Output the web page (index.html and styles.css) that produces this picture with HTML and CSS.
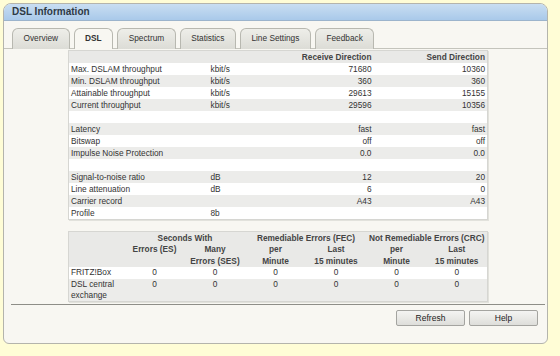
FILE: index.html
```html
<!DOCTYPE html>
<html lang="en">
<head>
  <meta charset="UTF-8">
  <title>DSL Information</title>
  <link rel="stylesheet" href="styles.css">
</head>
<body>
  <div class="box">
    <div class="box-title">DSL Information</div>

    <div class="tabs">
      <span class="tab">Overview</span>
      <span class="tab active">DSL</span>
      <span class="tab">Spectrum</span>
      <span class="tab">Statistics</span>
      <span class="tab">Line Settings</span>
      <span class="tab">Feedback</span>
    </div>

    <div class="content">
      <table class="grid overview">
        <colgroup>
          <col style="width:140px">
          <col style="width:60px">
          <col style="width:105px">
          <col style="width:114px">
        </colgroup>
        <thead>
          <tr><th></th><th></th><th class="num">Receive Direction</th><th class="num">Send Direction</th></tr>
        </thead>
        <tbody>
          <tr><td>Max. DSLAM throughput</td><td>kbit/s</td><td class="num">71680</td><td class="num">10360</td></tr>
          <tr><td>Min. DSLAM throughput</td><td>kbit/s</td><td class="num">360</td><td class="num">360</td></tr>
          <tr><td>Attainable throughput</td><td>kbit/s</td><td class="num">29613</td><td class="num">15155</td></tr>
          <tr><td>Current throughput</td><td>kbit/s</td><td class="num">29596</td><td class="num">10356</td></tr>
          <tr><td>&nbsp;</td><td></td><td></td><td></td></tr>
          <tr><td>Latency</td><td></td><td class="num">fast</td><td class="num">fast</td></tr>
          <tr><td>Bitswap</td><td></td><td class="num">off</td><td class="num">off</td></tr>
          <tr><td>Impulse Noise Protection</td><td></td><td class="num">0.0</td><td class="num">0.0</td></tr>
          <tr><td>&nbsp;</td><td></td><td></td><td></td></tr>
          <tr><td>Signal-to-noise ratio</td><td>dB</td><td class="num">12</td><td class="num">20</td></tr>
          <tr><td>Line attenuation</td><td>dB</td><td class="num">6</td><td class="num">0</td></tr>
          <tr><td>Carrier record</td><td></td><td class="num">A43</td><td class="num">A43</td></tr>
          <tr><td>Profile</td><td>8b</td><td></td><td></td></tr>
        </tbody>
      </table>

      <table class="grid errors">
        <colgroup>
          <col style="width:56px">
          <col style="width:60px">
          <col style="width:61px">
          <col style="width:60px">
          <col style="width:61px">
          <col style="width:60px">
          <col style="width:61px">
        </colgroup>
        <thead>
          <tr>
            <th></th>
            <th colspan="2">Seconds With</th>
            <th colspan="2">Remediable Errors (FEC)</th>
            <th colspan="2">Not Remediable Errors (CRC)</th>
          </tr>
          <tr class="sub">
            <th></th>
            <th>Errors (ES)</th>
            <th>Many<br>Errors (SES)</th>
            <th>per<br>Minute</th>
            <th>Last<br>15 minutes</th>
            <th>per<br>Minute</th>
            <th>Last<br>15 minutes</th>
          </tr>
        </thead>
        <tbody>
          <tr><td>FRITZ!Box</td><td>0</td><td>0</td><td>0</td><td>0</td><td>0</td><td>0</td></tr>
          <tr><td>DSL central exchange</td><td>0</td><td>0</td><td>0</td><td>0</td><td>0</td><td>0</td></tr>
        </tbody>
      </table>
    </div>

    <div class="footer">
      <button>Refresh</button>
      <button>Help</button>
    </div>
  </div>
</body>
</html>
```

FILE: styles.css
```css
body {
  margin: 0;
  padding: 3px;
  background-color: #fffdd6;
  font-family: "Liberation Sans", Arial, sans-serif;
  color: #333;
}

.box {
  box-sizing: border-box;
  width: 545px;
  height: 341px;
  background-color: #f8f7f2;
  border: 1px solid #b4b4ac;
  border-radius: 8px 8px 6px 6px;
  overflow: hidden;
  display: flex;
  flex-direction: column;
}

.box-title {
  height: 16px;
  line-height: 16px;
  padding-left: 8px;
  font-size: 10px;
  font-weight: bold;
  color: #2e3a46;
  background: linear-gradient(#c9def2, #a9c9ea);
  border-bottom: 1px solid #9cb4cc;
}

.tabs {
  display: flex;
  gap: 4px;
  margin-top: 7px;
  padding-left: 8px;
  border-bottom: 1px solid #c4c4bc;
  height: 20px;
}

.tab {
  box-sizing: border-box;
  height: 21px;
  padding: 0 10.5px;
  line-height: 19px;
  font-size: 8.3px;
  color: #333;
  background: linear-gradient(#eeeee9, #dcdcd6);
  border: 1px solid #b8b8b0;
  border-bottom: none;
  border-radius: 6px 6px 0 0;
}

.tab.active {
  background: #f8f7f2;
  font-weight: bold;
}

.content {
  padding: 1px 0 0 64px;
}

.grid {
  width: 419px;
  border-collapse: collapse;
  table-layout: fixed;
  font-size: 8.3px;
  border: 1px solid #d6d6d2;
  box-shadow: 1px 1px 0 #e2e2dc;
}

.grid th,
.grid td {
  padding: 0 2px;
  height: 12px;
  line-height: 12px;
  text-align: left;
  white-space: nowrap;
}

.grid th {
  background-color: #e9e9e7;
  color: #444;
  font-weight: bold;
}

.grid .num {
  text-align: right;
}

.overview tbody tr:nth-child(odd) td {
  background-color: #ffffff;
}

.overview tbody tr:nth-child(even) td {
  background-color: #ececea;
}

.errors {
  margin-top: 11px;
}

.errors th {
  text-align: center;
  line-height: 12px;
}

.errors .sub th {
  vertical-align: top;
  line-height: 11.5px;
}

.errors td {
  text-align: center;
  vertical-align: top;
  line-height: 11px;
}

.errors td:first-child {
  text-align: left;
  white-space: normal;
}

.errors tbody tr:nth-child(odd) td {
  background-color: #ffffff;
}

.errors tbody tr:nth-child(even) td {
  background-color: #ececea;
}

.footer {
  margin: auto 2px 0 7px;
  border-top: 1px solid #8e8e88;
  padding: 5px 7px 17px 0;
  display: flex;
  justify-content: flex-end;
  gap: 4px;
}

button {
  width: 69px;
  height: 16px;
  padding: 0;
  font-family: "Liberation Sans", Arial, sans-serif;
  font-size: 8.5px;
  color: #222;
  background: linear-gradient(#f4f4f2, #dededa);
  border: 1px solid #a4a4a0;
  border-radius: 2px;
}
```
